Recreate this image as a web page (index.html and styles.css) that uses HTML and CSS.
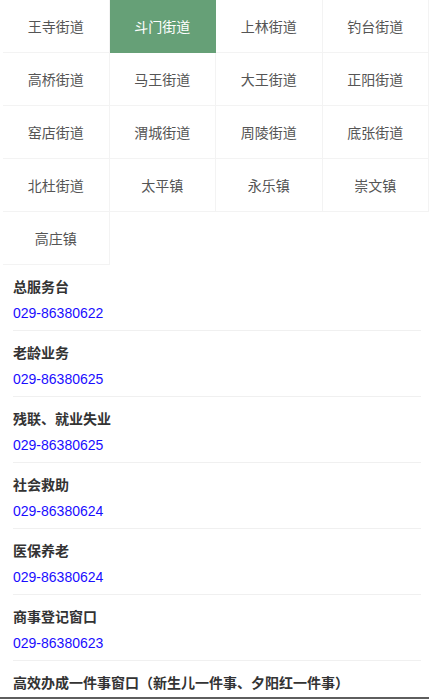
FILE: index.html
```html
<!DOCTYPE html>
<html lang="zh-CN">
<head>
  <meta charset="UTF-8" />
  <meta name="viewport" content="width=device-width, initial-scale=1.0" />
  <title>便民服务电话</title>
  <link rel="stylesheet" href="styles.css">
</head>
<body>
  <div class="streets">
    <div class="street">王寺街道</div>
    <div class="street active">斗门街道</div>
    <div class="street">上林街道</div>
    <div class="street">钓台街道</div>
    <div class="street">高桥街道</div>
    <div class="street">马王街道</div>
    <div class="street">大王街道</div>
    <div class="street">正阳街道</div>
    <div class="street">窑店街道</div>
    <div class="street">渭城街道</div>
    <div class="street">周陵街道</div>
    <div class="street">底张街道</div>
    <div class="street">北杜街道</div>
    <div class="street">太平镇</div>
    <div class="street">永乐镇</div>
    <div class="street">崇文镇</div>
    <div class="street">高庄镇</div>
  </div>

  <ul class="phones">
    <li class="phone-item">
      <div class="phone-title">总服务台</div>
      <a class="phone-num" href="tel:029-86380622">029-86380622</a>
    </li>
    <li class="phone-item">
      <div class="phone-title">老龄业务</div>
      <a class="phone-num" href="tel:029-86380625">029-86380625</a>
    </li>
    <li class="phone-item">
      <div class="phone-title">残联、就业失业</div>
      <a class="phone-num" href="tel:029-86380625">029-86380625</a>
    </li>
    <li class="phone-item">
      <div class="phone-title">社会救助</div>
      <a class="phone-num" href="tel:029-86380624">029-86380624</a>
    </li>
    <li class="phone-item">
      <div class="phone-title">医保养老</div>
      <a class="phone-num" href="tel:029-86380624">029-86380624</a>
    </li>
    <li class="phone-item">
      <div class="phone-title">商事登记窗口</div>
      <a class="phone-num" href="tel:029-86380623">029-86380623</a>
    </li>
    <li class="phone-item">
      <div class="phone-title">高效办成一件事窗口（新生儿一件事、夕阳红一件事）</div>
      <a class="phone-num" href="tel:029-86380623">029-86380623</a>
    </li>
  </ul>

  <div class="bottom-bar"></div>
</body>
</html>
```

FILE: styles.css
```css
body {
  margin: 0;
  font-family: "Liberation Sans", "Noto Sans CJK SC", sans-serif;
  font-size: 14px;
  background: #fff;
  color: #333;
}
.streets {
  display: grid;
  grid-template-columns: repeat(4, 1fr);
  padding-left: 3px;
}
.street {
  height: 53px;
  display: flex;
  align-items: center;
  justify-content: center;
  color: #555;
  border-right: 1px solid #f3f3f3;
  border-bottom: 1px solid #f3f3f3;
  box-sizing: border-box;
}
.street.active {
  background-color: #66a077;
  border-color: #66a077;
  color: #fff;
}
.phones {
  list-style: none;
  margin: 0;
  padding: 0 8px 0 13px;
}
.phone-item {
  padding: 11px 0 6px;
  border-bottom: 1px solid #f0f0f0;
}
.phone-title {
  font-weight: bold;
  line-height: 22px;
  color: #333;
}
.phone-num {
  display: block;
  margin-top: 4px;
  line-height: 22px;
  color: #1a0dff;
  text-decoration: none;
}
.bottom-bar {
  position: fixed;
  left: 0;
  right: 0;
  bottom: 0;
  height: 2px;
  background: #5e5e5e;
}
```
